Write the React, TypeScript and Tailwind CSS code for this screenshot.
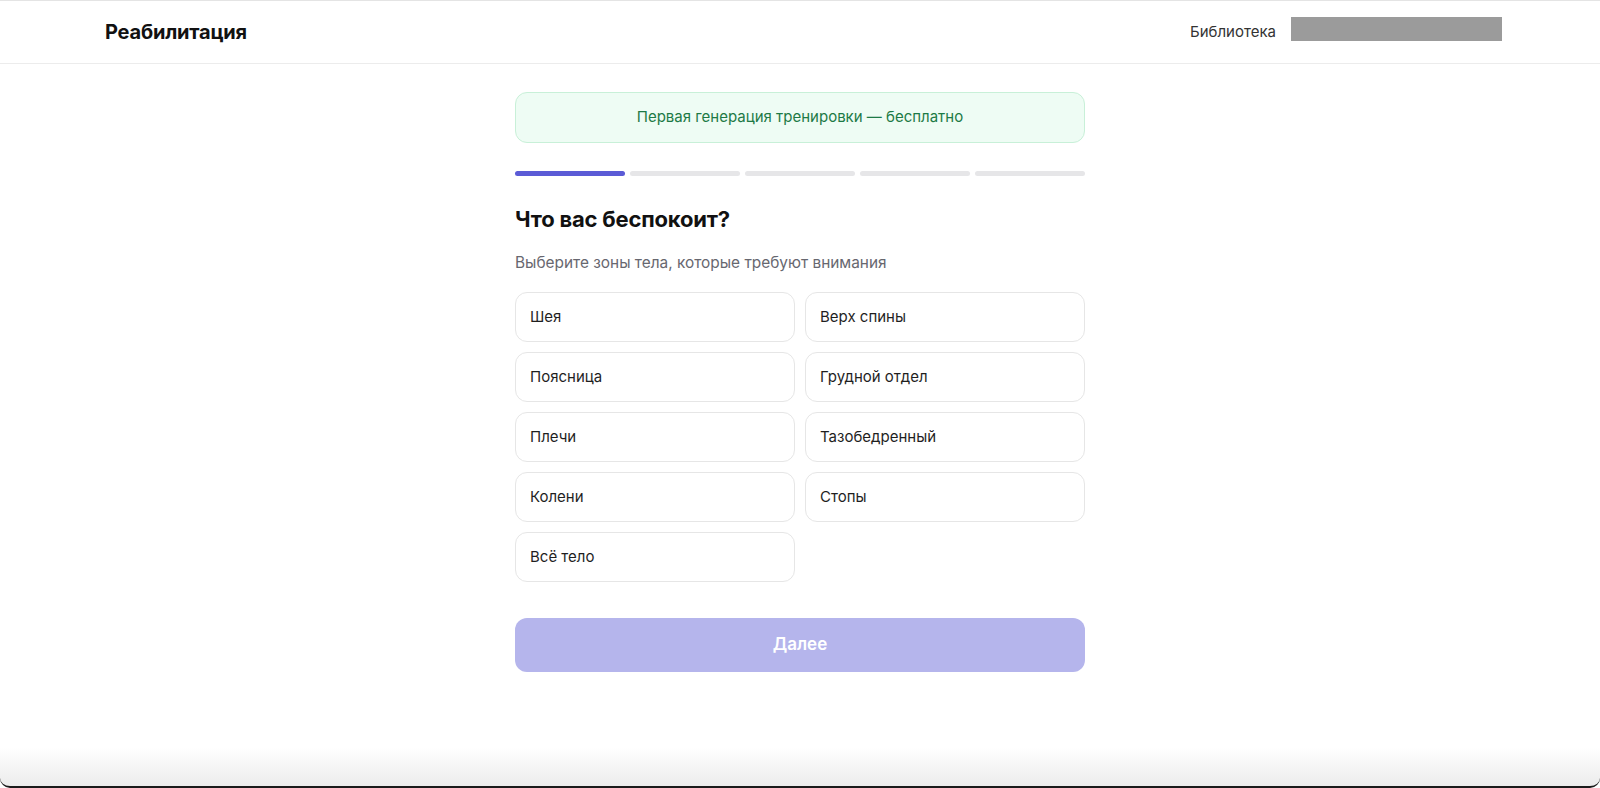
import { useState } from "react";

const zones = [
  "Шея",
  "Верх спины",
  "Поясница",
  "Грудной отдел",
  "Плечи",
  "Тазобедренный",
  "Колени",
  "Стопы",
  "Всё тело",
];

export default function App() {
  const [selected, setSelected] = useState<string[]>([]);
  const step = 1;
  const totalSteps = 5;

  const toggleZone = (zone: string) => {
    setSelected((prev) =>
      prev.includes(zone) ? prev.filter((z) => z !== zone) : [...prev, zone]
    );
  };

  return (
    <div className="flex h-[788px] flex-col overflow-hidden border-t border-[#e4e4e4] bg-white font-['Inter',sans-serif]">
      <header className="flex h-[63px] shrink-0 items-center justify-between border-b border-[#ececec] pl-[105px] pr-[98px]">
        <span className="text-[20px] font-bold tracking-[-0.2px] text-[#111]">Реабилитация</span>
        <div className="flex items-center gap-[15px]">
          <a href="#" className="text-[15px] text-[#333]">
            Библиотека
          </a>
          <div className="mb-[7px] h-6 w-[211px] bg-[#9b9b9b]" />
        </div>
      </header>

      <main className="flex flex-1 justify-center">
        <div className="w-[570px] pt-[28px]">
          <div className="flex h-[51px] items-center justify-center rounded-xl border border-[#c8f0d8] bg-[#eefcf4] text-[15px] text-[#1d7a46]">
            Первая генерация тренировки — бесплатно
          </div>

          <div className="mt-[28px] flex gap-[5px]">
            {Array.from({ length: totalSteps }).map((_, i) => (
              <div
                key={i}
                className={
                  i < step
                    ? "h-[5px] flex-1 rounded-full bg-[#5b5bd6]"
                    : "h-[5px] flex-1 rounded-full bg-[#e6e6e8]"
                }
              />
            ))}
          </div>

          <h1 className="mt-[29px] text-[22px] leading-7 font-bold tracking-[-0.2px] text-[#111]">
            Что вас беспокоит?
          </h1>
          <p className="mt-[19px] text-[15.4px] leading-[22px] text-[#67676f]">
            Выберите зоны тела, которые требуют внимания
          </p>

          <div className="mt-[18px] grid grid-cols-2 gap-[10px]">
            {zones.map((zone) => (
              <button
                key={zone}
                onClick={() => toggleZone(zone)}
                className={
                  selected.includes(zone)
                    ? "flex h-[50px] items-center rounded-xl border border-[#5b5bd6] bg-[#f3f3fd] px-[14px] text-left text-[15px] text-[#1f1f1f]"
                    : "flex h-[50px] items-center rounded-xl border border-[#e6e6e6] bg-white px-[14px] text-left text-[15px] text-[#1f1f1f]"
                }
              >
                {zone}
              </button>
            ))}
          </div>

          <button
            disabled={selected.length === 0}
            className={
              selected.length === 0
                ? "mt-[36px] h-[54px] w-full rounded-xl bg-[#b5b5ec] text-[17px] font-semibold text-white"
                : "mt-[36px] h-[54px] w-full rounded-xl bg-[#5b5bd6] text-[17px] font-semibold text-white"
            }
          >
            Далее
          </button>
        </div>
      </main>

      <div className="h-[40px] shrink-0 rounded-b-[10px] border-b-2 border-[#1a1a1a] bg-gradient-to-b from-white to-[#ececec]" />
    </div>
  );
}
